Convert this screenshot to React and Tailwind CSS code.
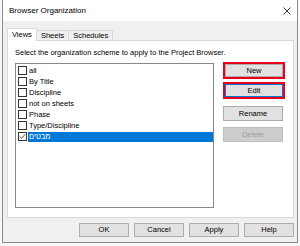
import React from "react";

const font = { fontFamily: '"Liberation Sans", Arial, sans-serif' };

function Check({ checked }) {
  return (
    <div className="w-[9px] h-[9px] border border-[#333333] bg-white flex items-center justify-center shrink-0">
      {checked && (
        <svg width="7" height="7" viewBox="0 0 7 7">
          <path d="M0.8 3.6 L2.7 5.4 L6.2 1.2" fill="none" stroke="#555" strokeWidth="1" />
        </svg>
      )}
    </div>
  );
}

function Row({ label, checked, selected }) {
  return (
    <div className="flex items-center h-[11px]">
      <div className="pl-[2px] pr-[1px] flex items-center">
        <Check checked={checked} />
      </div>
      <div
        className={
          "flex-1 h-[10px] flex items-center pl-[1px] text-[7.5px] leading-none " +
          (selected ? "bg-[#0078d7] text-white" : "text-black")
        }
      >
        {label}
      </div>
    </div>
  );
}

function Btn({ children, className = "" }) {
  return (
    <div
      className={
        "flex items-center justify-center text-[7.5px] leading-none border " + className
      }
    >
      {children}
    </div>
  );
}

export default function App() {
  const items = ["all", "By Title", "Discipline", "not on sheets", "Phase", "Type/Discipline"];
  return (
    <div className="w-[300px] h-[246px] bg-[#f7f7f7] overflow-hidden" style={font}>
      <div className="ml-[2px] w-[296px] h-[243px] border-x border-b border-[#8c8c8c] bg-[#f0f0f0] flex flex-col">
        {/* title bar */}
        <div className="h-[21px] bg-white flex items-center justify-between pl-[6px] pr-[6px] shrink-0">
          <span className="text-[8px] text-black leading-none">Browser Organization</span>
          <svg width="8" height="8" viewBox="0 0 8 8">
            <path d="M0.5 0.5 L7.5 7.5 M7.5 0.5 L0.5 7.5" stroke="#333" strokeWidth="1" />
          </svg>
        </div>
        {/* tabs */}
        <div className="flex items-end pl-[4px] mt-[7px] h-[12px] relative z-10">
          <div className="h-[13px] px-[4px] bg-white border-x border-t border-[#d9d9d9] flex items-center text-[7.5px] leading-none -mb-[1px]">
            Views
          </div>
          <div className="h-[10px] px-[4px] bg-[#f0f0f0] border-r border-t border-[#d9d9d9] flex items-center text-[7.5px] leading-none">
            Sheets
          </div>
          <div className="h-[10px] px-[4px] bg-[#f0f0f0] border-r border-t border-[#d9d9d9] flex items-center text-[7.5px] leading-none">
            Schedules
          </div>
        </div>
        {/* panel */}
        <div className="ml-[4px] mr-[3px] h-[178px] bg-white border border-[#d9d9d9] pl-[7px] pt-[8px]">
          <div className="text-[7.5px] leading-none text-black h-[10px]">
            Select the organization scheme to apply to the Project Browser.
          </div>
          <div className="flex mt-[4px]">
            <div className="w-[199px] h-[145px] border border-[#828790] bg-white pt-[1px]">
              {items.map((i) => (
                <Row key={i} label={i} />
              ))}
              <Row label="מבטים" checked selected />
            </div>
            <div className="ml-[9px] w-[62px] flex flex-col">
              <div className="h-[17px] border-2 border-[#e8001c] -mt-[1px]">
                <Btn className="h-full bg-[#e1e1e1] border-[#adadad]">New</Btn>
              </div>
              <div className="h-[17px] border-2 border-[#e8001c] mt-[3px]">
                <Btn className="h-full bg-[#e1e1e1] border-[#0078d7]">Edit</Btn>
              </div>
              <Btn className="mt-[7px] w-[60px] h-[15px] bg-[#e1e1e1] border-[#adadad]">Rename</Btn>
              <Btn className="mt-[6px] w-[60px] h-[15px] bg-[#cccccc] border-[#bfbfbf] text-[#a0a0a0]">Delete</Btn>
            </div>
          </div>
        </div>
        {/* bottom buttons */}
        <div className="flex justify-end gap-[5px] pr-[3px] mt-[5px]">
          <Btn className="w-[50px] h-[14px] bg-[#e1e1e1] border-[#adadad]">OK</Btn>
          <Btn className="w-[50px] h-[14px] bg-[#e1e1e1] border-[#adadad]">Cancel</Btn>
          <Btn className="w-[50px] h-[14px] bg-[#e1e1e1] border-[#adadad]">Apply</Btn>
          <Btn className="w-[50px] h-[14px] bg-[#e1e1e1] border-[#adadad]">Help</Btn>
        </div>
      </div>
    </div>
  );
}
